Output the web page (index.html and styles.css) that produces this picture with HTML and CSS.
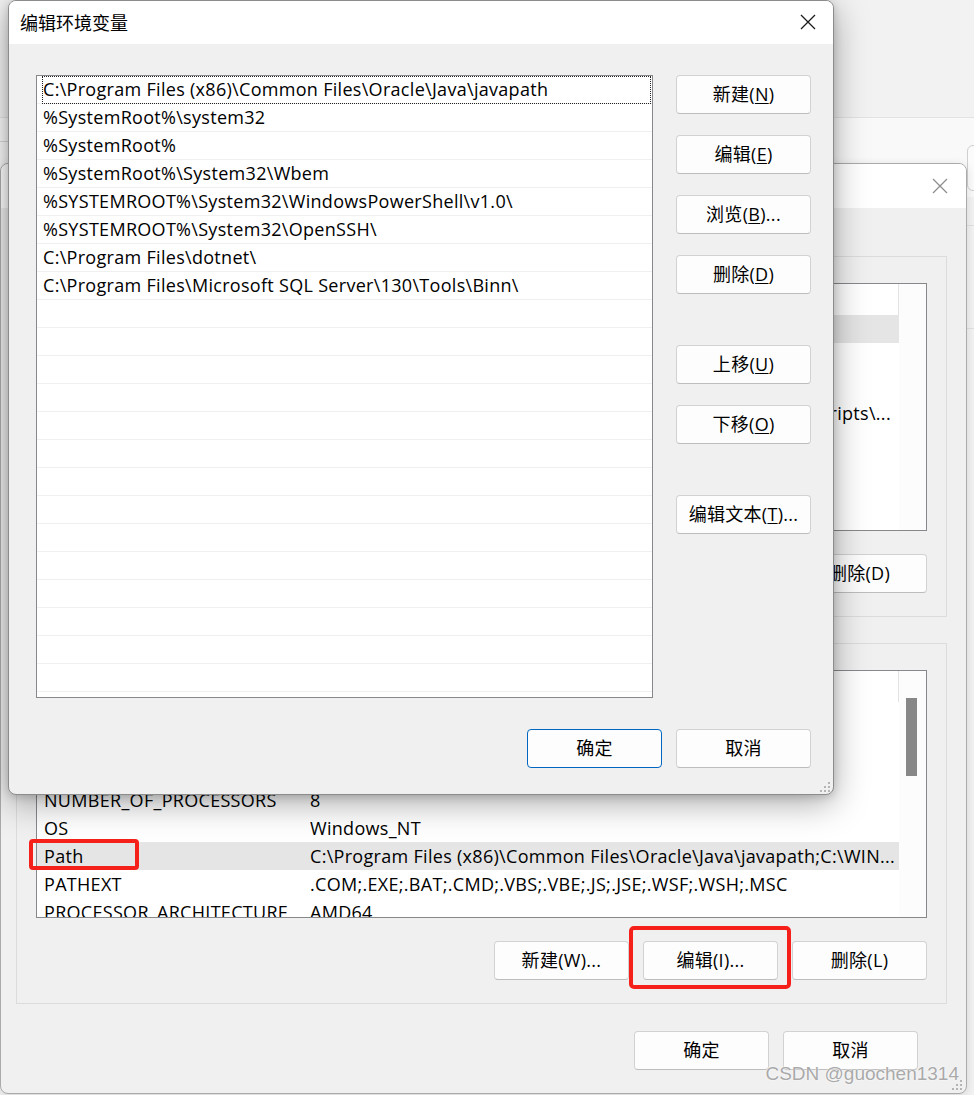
FILE: index.html
```html
<!DOCTYPE html>
<html lang="zh-CN">
<head>
<meta charset="utf-8">
<title>编辑环境变量</title>
<link rel="stylesheet" href="styles.css">
</head>
<body>
<div class="desk">
  <div class="back">
    <div class="back-band"></div>
    <div class="back-line-left"></div>
    <div class="back-btn"></div>
    <div class="back-rline r1"></div>
    <div class="back-rline r2"></div>
  </div>

  <div class="win env">
    <div class="tbar">
      <span class="ttl">环境变量</span>
      <svg class="x x-dim" width="16" height="16" viewBox="0 0 16 16"><path d="M1 1L15 15M15 1L1 15" /></svg>
    </div>
    <div class="vbody">
      <div class="group">
        <div class="legend">guochen 的用户变量(U)</div>
        <div class="lv">
          <div class="lv-main">
            <div class="lv-head"><span class="c1">变量</span><span class="c2">值</span></div>
            <div class="lv-row sel"><span class="c1">IntelliJ IDEA</span><span class="c2">D:\IntelliJ IDEA 2021.1\bin;</span></div>
            <div class="lv-row"><span class="c1">OneDrive</span><span class="c2">C:\Users\guochen\OneDrive</span></div>
            <div class="lv-row"><span class="c1">OneDriveConsumer</span><span class="c2">C:\Users\guochen\OneDrive</span></div>
            <div class="lv-row"><span class="c1">Path</span><span class="c2">C:\Users\guo\AppData\Local\Programs\Python\Python39\Scripts\...</span></div>
            <div class="lv-row"><span class="c1">TEMP</span><span class="c2">%USERPROFILE%\AppData\Local\Temp</span></div>
            <div class="lv-row"><span class="c1">TMP</span><span class="c2">%USERPROFILE%\AppData\Local\Temp</span></div>
          </div>
          <div class="lv-scroll"></div>
        </div>
        <div class="btnrow">
          <div class="btn">新建(N)...</div>
          <div class="btn">编辑(E)...</div>
          <div class="btn">删除(D)</div>
        </div>
      </div>

      <div class="group">
        <div class="legend">系统变量(S)</div>
        <div class="lv">
          <div class="lv-main">
            <div class="lv-head"><span class="c1">变量</span><span class="c2">值</span></div>
            <div class="lv-row"><span class="c1">ComSpec</span><span class="c2">C:\WINDOWS\system32\cmd.exe</span></div>
            <div class="lv-row"><span class="c1">DriverData</span><span class="c2">C:\Windows\System32\Drivers\DriverData</span></div>
            <div class="lv-row"><span class="c1">JAVA_HOME</span><span class="c2">C:\Program Files\Java\jdk1.8.0_281</span></div>
            <div class="lv-row"><span class="c1">NUMBER_OF_PROCESSORS</span><span class="c2">8</span></div>
            <div class="lv-row"><span class="c1">OS</span><span class="c2">Windows_NT</span></div>
            <div class="lv-row sel"><span class="c1">Path</span><span class="c2">C:\Program Files (x86)\Common Files\Oracle\Java\javapath;C:\WIN...</span></div>
            <div class="lv-row"><span class="c1">PATHEXT</span><span class="c2">.COM;.EXE;.BAT;.CMD;.VBS;.VBE;.JS;.JSE;.WSF;.WSH;.MSC</span></div>
            <div class="lv-row"><span class="c1">PROCESSOR_ARCHITECTURE</span><span class="c2">AMD64</span></div>
          </div>
          <div class="lv-scroll"><div class="thumb"></div></div>
        </div>
        <div class="btnrow">
          <div class="btn">新建(W)...</div>
          <div class="btn">编辑(I)...</div>
          <div class="btn">删除(L)</div>
        </div>
      </div>

      <div class="vfoot">
        <div class="btn">确定</div>
        <div class="btn">取消</div>
      </div>
    </div>
    <svg class="grip grip-env" width="12" height="12" viewBox="0 0 12 12"><rect x="9" y="1" width="2" height="2"/><rect x="5" y="5" width="2" height="2"/><rect x="9" y="5" width="2" height="2"/><rect x="1" y="9" width="2" height="2"/><rect x="5" y="9" width="2" height="2"/><rect x="9" y="9" width="2" height="2"/></svg>
  </div>

  <div class="win edit">
    <div class="tbar">
      <span class="ttl">编辑环境变量</span>
      <svg class="x" width="16" height="16" viewBox="0 0 16 16"><path d="M1 1L15 15M15 1L1 15" /></svg>
    </div>
    <div class="ebody">
      <div class="emain">
        <div class="elist">
          <div class="erow focus">C:\Program Files (x86)\Common Files\Oracle\Java\javapath</div>
          <div class="erow">%SystemRoot%\system32</div>
          <div class="erow">%SystemRoot%</div>
          <div class="erow">%SystemRoot%\System32\Wbem</div>
          <div class="erow">%SYSTEMROOT%\System32\WindowsPowerShell\v1.0\</div>
          <div class="erow">%SYSTEMROOT%\System32\OpenSSH\</div>
          <div class="erow">C:\Program Files\dotnet\</div>
          <div class="erow">C:\Program Files\Microsoft SQL Server\130\Tools\Binn\</div>
          <div class="erow"></div>
          <div class="erow"></div>
          <div class="erow"></div>
          <div class="erow"></div>
          <div class="erow"></div>
          <div class="erow"></div>
          <div class="erow"></div>
          <div class="erow"></div>
          <div class="erow"></div>
          <div class="erow"></div>
          <div class="erow"></div>
          <div class="erow"></div>
          <div class="erow"></div>
          <div class="erow"></div>
        </div>
        <div class="side">
          <div class="btn">新建(<u>N</u>)</div>
          <div class="btn">编辑(<u>E</u>)</div>
          <div class="btn">浏览(<u>B</u>)...</div>
          <div class="btn">删除(<u>D</u>)</div>
          <div class="btn gap">上移(<u>U</u>)</div>
          <div class="btn">下移(<u>O</u>)</div>
          <div class="btn gap">编辑文本(<u>T</u>)...</div>
        </div>
      </div>
      <div class="efoot">
        <div class="btn primary">确定</div>
        <div class="btn">取消</div>
      </div>
    </div>
    <svg class="grip grip-edit" width="12" height="12" viewBox="0 0 12 12"><rect x="9" y="1" width="2" height="2"/><rect x="5" y="5" width="2" height="2"/><rect x="9" y="5" width="2" height="2"/><rect x="1" y="9" width="2" height="2"/><rect x="5" y="9" width="2" height="2"/><rect x="9" y="9" width="2" height="2"/></svg>
  </div>

  <div class="mark mark-path"></div>
  <div class="mark mark-edit"></div>
  <div class="watermark">CSDN @guochen1314</div>
</div>
</body>
</html>
```

FILE: styles.css
```css
* { box-sizing: border-box; margin: 0; padding: 0; }
html, body { width: 974px; height: 1095px; overflow: hidden; }
body {
  background: #f2f2f2;
  font-family: "Open Sans", "Noto Sans CJK SC", sans-serif;
  font-size: 18px;
  letter-spacing: 0.3px;
  color: #000;
}
u { text-decoration: underline; text-underline-offset: 2px; text-decoration-thickness: 1px; }

.desk { position: relative; width: 974px; height: 1095px; overflow: hidden; }

/* back-most window */
.back { position: absolute; inset: 0; background: #f2f2f2; }
.back-band { position: absolute; left: 0; right: 0; top: 117px; height: 80px; background: #f9f9f9; border-top: 1px solid #e3e3e3; }
.back-line-left { position: absolute; left: 0; width: 10px; top: 141px; height: 1px; background: #d8d8d8; }
.back-btn { position: absolute; left: 967px; top: 145px; width: 30px; height: 46px; border: 1px solid #cfcfcf; border-radius: 6px; background: #fbfbfb; }
.back-rline { position: absolute; left: 967px; width: 7px; height: 1px; background: #e0e0e0; }
.back-rline.r1 { top: 225px; }
.back-rline.r2 { top: 328px; }

/* windows */
.win {
  position: absolute;
  display: flex;
  flex-direction: column;
  background: #f0f0f0;
  border-radius: 8px;
  overflow: hidden;
}
.env {
  left: 0; top: 163px; width: 967px; height: 931px;
  border: 1px solid #ababab;
  box-shadow: 0 2px 10px rgba(0, 0, 0, 0.12);
}
.edit {
  left: 8px; top: 0; width: 826px; height: 795px;
  border: 1px solid #8c8c8c;
  box-shadow: 0 8px 34px rgba(0, 0, 0, 0.34), 0 2px 8px rgba(0, 0, 0, 0.16);
}

.tbar { flex: none; display: flex; align-items: center; background: #fff; }
.env .tbar { height: 44px; padding-left: 12px; }
.edit .tbar { height: 43px; padding-left: 11px; padding-bottom: 1px; }
.ttl { font-size: 18px; letter-spacing: 0; }
.x { margin-left: auto; flex: none; }
.x path { stroke: #1b1b1b; stroke-width: 1.3; fill: none; }
.x-dim path { stroke: #8d8d8d; }
.edit .x { margin-right: 17px; }
.env .x { margin-right: 18px; }

.grip { position: absolute; fill: #b4b4b4; }
.grip-edit { right: 2px; bottom: 1px; }
.grip-env { right: 3px; bottom: 2px; }

/* buttons */
.btn {
  flex: none;
  width: 135px;
  height: 39px;
  display: flex;
  align-items: center;
  justify-content: center;
  background: #fdfdfd;
  border: 1px solid #d2d2d2;
  border-bottom-color: #bdbdbd;
  border-radius: 4px;
  white-space: nowrap;
  line-height: 1;
  padding-bottom: 1px;
}
.btn.primary { border-color: #0067c0; }

/* edit dialog body */
.ebody { flex: 1; display: flex; flex-direction: column; padding: 31px 22px 0 27px; }
.emain { display: flex; gap: 23px; }
.elist {
  flex: none;
  width: 617px;
  height: 623px;
  background: #fff;
  border: 1px solid #86888c;
  overflow: hidden;
}
.erow {
  position: relative;
  height: 28px;
  line-height: 27px;
  padding-left: 6px;
  border-bottom: 1px solid #f0f0f0;
  white-space: nowrap;
}
.erow.focus::before {
  content: "";
  position: absolute;
  left: 5px; right: 1px; top: 0; bottom: -1px;
  border: 1px dotted #222;
}
.side { display: flex; flex-direction: column; width: 135px; }
.side .btn + .btn { margin-top: 21px; }
.side .btn.gap { margin-top: 51px; }
.efoot { display: flex; justify-content: flex-end; gap: 14px; margin-top: 31px; }

/* environment window body */
.vbody { flex: 1; padding: 48px 19px 0 15px; }
.group {
  position: relative;
  width: 931px;
  border: 1px solid #dcdcdc;
  padding: 26px 19px 23px 19px;
}
.group + .group { margin-top: 26px; }
.legend {
  position: absolute;
  left: 10px; top: -13px;
  padding: 0 4px;
  background: #f0f0f0;
  line-height: 24px;
}
.lv {
  display: flex;
  height: 248px;
  background: #fff;
  border: 1px solid #86888c;
  overflow: hidden;
}
.lv-main { flex: none; width: 862px; }
.lv-scroll { flex: 1; position: relative; background: #fcfcfc; }
.thumb { position: absolute; left: 7px; top: 27px; width: 11px; height: 78px; background: #878787; }
.lv-head {
  display: flex;
  height: 31px;
  line-height: 31px;
  border-right: 1px solid #e3e3e3;
}
.lv-row { display: flex; height: 28px; line-height: 28px; white-space: nowrap; }
.lv-row.sel { background: #e5e5e5; }
.c1 { flex: none; width: 273px; padding-left: 7px; overflow: hidden; }
.c2 { flex: 1; overflow: hidden; }
.btnrow { display: flex; justify-content: flex-end; gap: 14px; margin-top: 23px; }
.vfoot { display: flex; justify-content: flex-end; gap: 14px; margin-top: 27px; padding-right: 29px; }

/* annotations */
.mark { position: absolute; border: 4px solid #f52019; border-radius: 4px; }
.mark-path { left: 29px; top: 839px; width: 110px; height: 31px; }
.mark-edit { left: 629px; top: 926px; width: 162px; height: 63px; border-radius: 5px; }
.watermark {
  position: absolute;
  right: 15px;
  top: 1062px;
  font-family: "Liberation Sans", sans-serif;
  font-size: 19px;
  line-height: 24px;
  letter-spacing: 0;
  color: #a9a9a9;
  text-shadow: 0 0 1px #fff, 0 0 2px #fff;
}
```
